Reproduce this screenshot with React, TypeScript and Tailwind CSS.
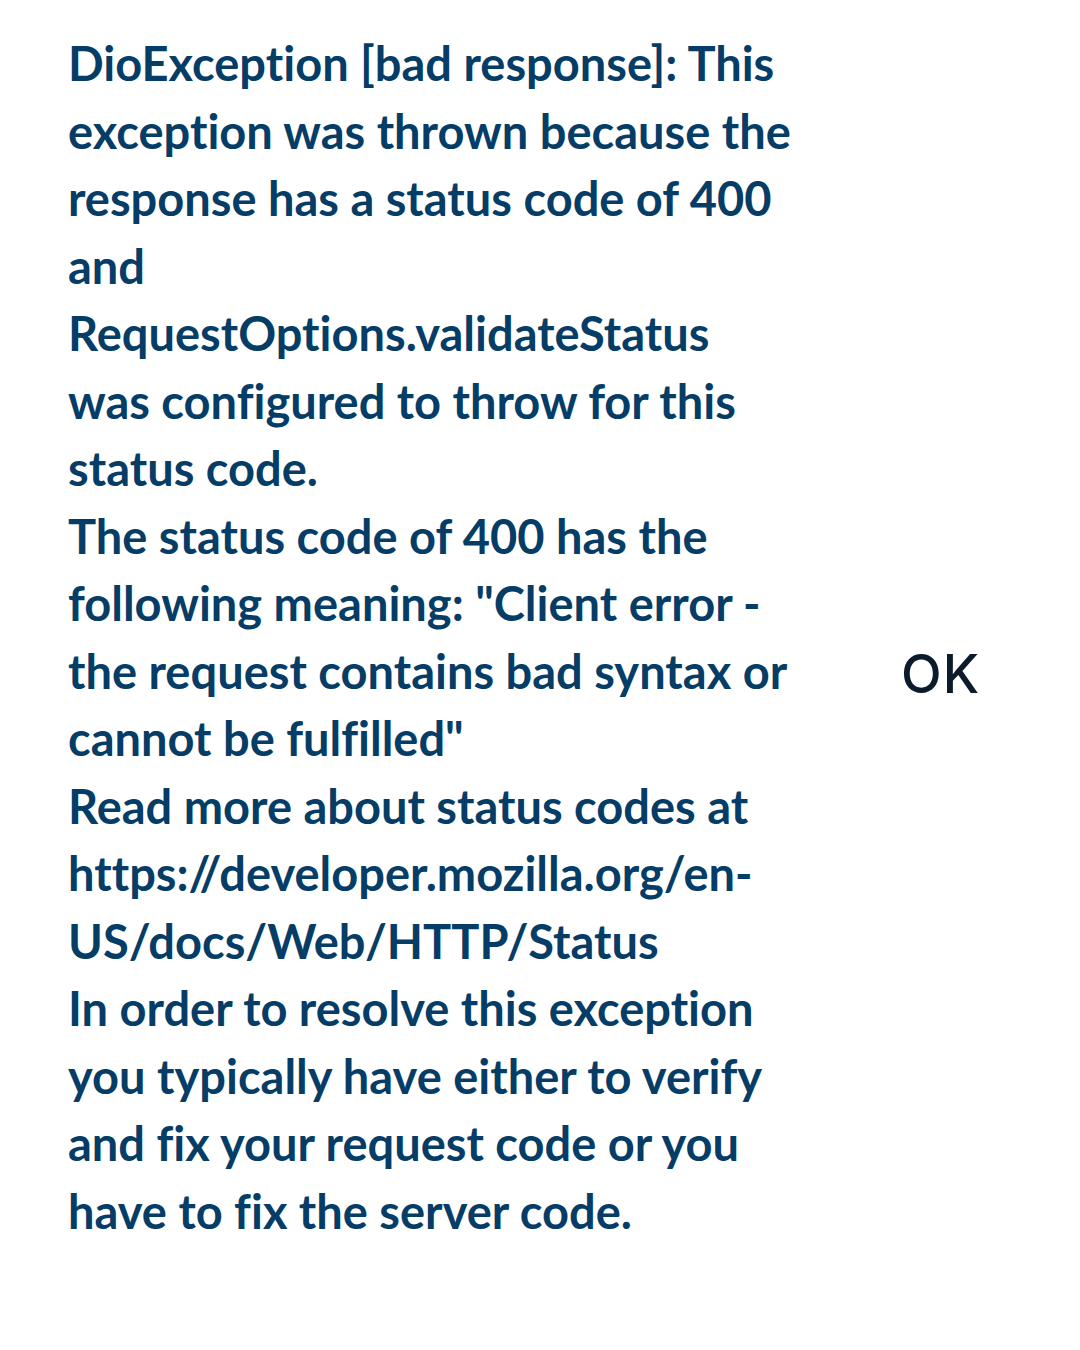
const lines = [
  'DioException [bad response]: This',
  'exception was thrown because the',
  'response has a status code of 400',
  'and',
  'RequestOptions.validateStatus',
  'was configured to throw for this',
  'status code.',
  'The status code of 400 has the',
  'following meaning: "Client error -',
  'the request contains bad syntax or',
  'cannot be fulfilled"',
  'Read more about status codes at',
  'https://developer.mozilla.org/en-',
  'US/docs/Web/HTTP/Status',
  'In order to resolve this exception',
  'you typically have either to verify',
  'and fix your request code or you',
  'have to fix the server code.',
]

export default function App() {
  return (
    <div className="w-[1080px] h-[1350px] bg-white flex items-start">
      <div
        className="pl-[68px] pt-[30px] w-[840px] text-[47px] leading-[67.5px] font-bold text-[#063d67] [font-variant-ligatures:none]"
        style={{ fontFamily: 'Lato, "Noto Sans", sans-serif' }}
      >
        {lines.map((l, i) => (
          <div key={i} className="whitespace-nowrap">{l}</div>
        ))}
      </div>
      <div className="flex-1 pt-[642px]">
        <div
          className="ml-[61px] text-[53px] leading-[64px] font-medium tracking-[1px] text-[#0b1b2b]"
          style={{ fontFamily: 'Inter, sans-serif' }}
        >
          OK
        </div>
      </div>
    </div>
  )
}
